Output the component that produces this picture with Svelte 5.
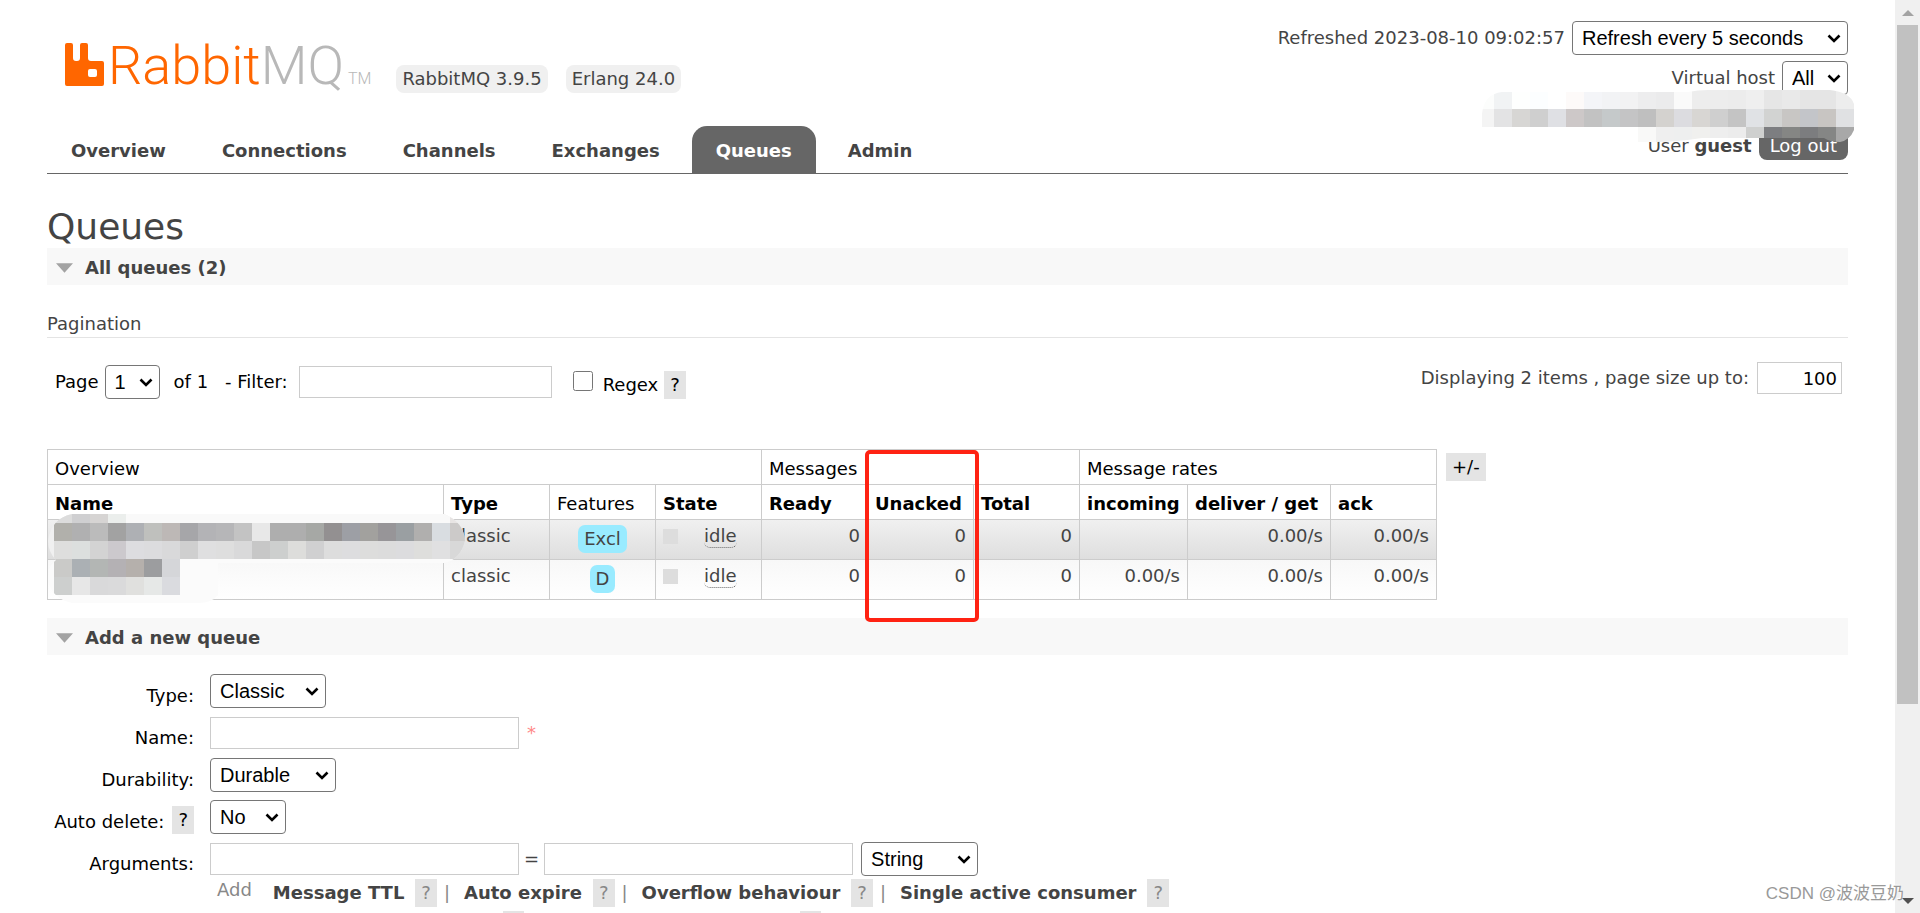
<script lang="ts">
  type Option = string;

  const tabs = ['Overview', 'Connections', 'Channels', 'Exchanges', 'Queues', 'Admin'];
  let activeTab = $state('Queues');

  const queues = [
    { type: 'classic', feature: 'Excl', state: 'idle', ready: 0, unacked: 0, total: 0, incoming: '', deliver: '0.00/s', ack: '0.00/s' },
    { type: 'classic', feature: 'D', state: 'idle', ready: 0, unacked: 0, total: 0, incoming: '0.00/s', deliver: '0.00/s', ack: '0.00/s' },
  ];

  const argLinks = [
    ['Message TTL', 'Auto expire', 'Overflow behaviour', 'Single active consumer'],
    ['Dead letter exchange', 'Dead letter routing key'],
  ];

  let refresh = $state('Refresh every 5 seconds');
  let vhost = $state('All');
  let page = $state('1');
  let filter = $state('');
  let regex = $state(false);
  let pageSize = $state('100');
  let queueType = $state('Classic');
  let queueName = $state('');
  let durability = $state('Durable');
  let autoDelete = $state('No');
  let argKey = $state('');
  let argValue = $state('');
  let argType = $state('String');

  // masked text: each string is a row of cell colours, left to right
  const cells = (row: string) => row.split(' ').map((c) => '#' + c);

  const clusterMask = [
    { x: 0, y: 0, h: 19, fill: cells('fcfdfc f1f3f4 fefffe fcfeff ffffff fdfaf9 f4f5f8 f2f3f5 f2f2f3 ededee ebebec fafafa ededed ededed ececec efefef e6e6e6 e9e9e9 e5e5e5 e5e5e5 ededed') },
    { x: 0, y: 19, h: 18, fill: cells('f4f4f4 e3e3e4 d7d6d4 cfcfcf dfe0e4 cdc8c8 c2c2c2 c5c9ca c4c4c5 bfbfbf d4d2cf dcdce0 d8d6d3 cfcfcf c4c4c4 e0e2e5 d2d3d2 c8c6c4 c3c5c9 c8c5c2 e0e1e3') },
    { x: 162, y: 37, h: 15, fill: cells('f9f9f8 efefef eeefef f0f0ee eeeeee ececec cfd0cf 7d7e81 858684 7c7d7f 858685 a8a8a8') },
  ];

  const nameMask = [
    { x: 6, y: 0, h: 9, fill: cells('dcdcdc cfcfd1 d6d4d3 ebeeec f9f9f9 f9f9f9 f9f9f9 f9f9f9 f9f9f9 f9f9f9 f9f9f9 f9f9f9 f9f9f9 f9f9f9 f9f9f9 f9f9f9 f9f9f9 f9f9f9 f9f9f9 f9f9f9 f9f9f9 f9f9f9 e8e5e4') },
    { x: 6, y: 9, h: 18, fill: cells('b1b0ab b0b0b1 bbbbbb a2a2a2 aeb0b4 bfc0bd bdb8b6 a6a6a9 b3b3b6 b6b6b8 c3c3c3 e8e8e8 aeaeae aeaeae a6a8a5 939091 9d9fa5 a2a19e 979598 9a9fa2 b0afae d9dde1 cccac9') },
    { x: 6, y: 27, h: 18, fill: cells('dededd dcdfde d3d3d3 ccc9cd dddde0 dcdcde d9d9da cfcfcf dfdfe0 dedede d9d9da c7c7c7 cdcfce dddddb d0d0d1 dddddd dddddf dddddc dcdcdc dcdcde dededc e0e0e1 d8d8d8') },
    { x: 6, y: 45, h: 18, fill: cells('cacac8 abb0b4 b3b6b4 b4b1b4 b5b0ac 9c9d9f d5d6d9') },
    { x: 6, y: 63, h: 18, fill: cells('cdcfce e7e7e7 d9d9da dadadb e0e0de e6e8e7 dadbdf') },
  ];
</script>

{#snippet chevron()}
  <svg class="chevron" viewBox="0 0 14 9" aria-hidden="true">
    <path d="M1.5 1.5 L7 7 L12.5 1.5" />
  </svg>
{/snippet}

{#snippet triangle()}
  <svg class="triangle" viewBox="0 0 18 10" aria-hidden="true">
    <path d="M0 0 H18 L9 10 Z" />
  </svg>
{/snippet}

{#snippet options(list: Option[])}
  {#each list as o}
    <option>{o}</option>
  {/each}
{/snippet}

{#snippet mask(rows)}
  {#each rows as row}
    {#each row.fill as fill, i}
      <rect x={row.x + i * 18} y={row.y} width="18" height={row.h} {fill} />
    {/each}
  {/each}
{/snippet}

<div class="window">
  <div class="page">
    <header>
      <div class="brand-side">
        <div class="brand">
          <a class="logo" href="#/" aria-label="RabbitMQ">
            <svg class="rabbit" viewBox="0 0 39 43" aria-hidden="true">
              <path
                fill-rule="evenodd"
                d="M2 0 H6 Q8 0 8 2 V15 Q8 18 11 18 H12 Q15 18 15 15 V2 Q15 0 17 0 H21 Q23 0 23 2 V15 Q23 18 26 18 H37 Q39 18 39 20 V41 Q39 43 37 43 H2 Q0 43 0 41 V2 Q0 0 2 0 Z M25 26 Q23 26 23 28 V32 Q23 34 25 34 H30 Q32 34 32 32 V28 Q32 26 30 26 Z"
              />
            </svg>
            <span class="wordmark">Rabbit<span class="mq">MQ</span></span>
            <span class="tm">TM</span>
          </a>
          <span class="version">RabbitMQ 3.9.5</span>
          <span class="version">Erlang 24.0</span>
        </div>
        <nav>
          {#each tabs as tab}
            <a href="#/{tab.toLowerCase()}" class:selected={tab === activeTab} onclick={() => (activeTab = tab)}>{tab}</a>
          {/each}
        </nav>
      </div>

      <div class="status">
        <div class="status-row">
          <label for="refresh">Refreshed 2023-08-10 09:02:57</label>
          <span class="select">
            <select id="refresh" bind:value={refresh}>
              {@render options(['Refresh every 5 seconds', 'Refresh every 10 seconds', 'Refresh every 30 seconds', 'Do not refresh'])}
            </select>
            {@render chevron()}
          </span>
        </div>
        <div class="status-row">
          <label for="vhost">Virtual host</label>
          <span class="select">
            <select id="vhost" bind:value={vhost}>{@render options(['All', '/'])}</select>
            {@render chevron()}
          </span>
        </div>
        <div class="status-row user">
          <span>User <b>guest</b></span>
          <button class="logout">Log out</button>
        </div>
        <svg class="cluster-mask" viewBox="0 0 378 52" aria-hidden="true">
          <clipPath id="cluster-clip">
            <path d="M6 37 V24 Q8 4 26 2 H212 Q222 0 232 0 H354 Q374 2 378 14 V40 Q374 50 364 52 Q354 52 348 48 H226 Q200 52 180 52 H162 V37 Z" />
          </clipPath>
          <g clip-path="url(#cluster-clip)">{@render mask(clusterMask)}</g>
        </svg>
      </div>
    </header>

    <main>
      <h1>Queues</h1>

      <section>
        <h2>{@render triangle()}All queues (2)</h2>
        <h3>Pagination</h3>

        <div class="pagination">
          <div class="filters">
            <div class="group">
              <label for="page">Page</label>
              <span class="select">
                <select id="page" bind:value={page}>{@render options(['1'])}</select>
                {@render chevron()}
              </span>
              <span class="page-count">of 1</span>
            </div>
            <div class="group filter">
              <label for="filter">- Filter:</label>
              <input id="filter" type="text" bind:value={filter} />
            </div>
            <div class="group regex">
              <input id="regex" type="checkbox" bind:checked={regex} />
              <label for="regex">Regex</label>
              <button class="help">?</button>
            </div>
          </div>
          <div class="group page-size">
            <label for="page-size">Displaying 2 items , page size up to:</label>
            <input id="page-size" type="text" bind:value={pageSize} />
          </div>
        </div>

        <div class="queue-list">
          <table>
            <colgroup>
              <col class="name" /><col /><col /><col /><col /><col /><col /><col class="incoming" /><col class="deliver" /><col />
            </colgroup>
            <thead>
              <tr>
                <th class="plain" colspan="4">Overview</th>
                <th class="plain" colspan="3">Messages</th>
                <th class="plain" colspan="3">Message rates</th>
              </tr>
              <tr>
                <th>Name</th>
                <th>Type</th>
                <th class="plain">Features</th>
                <th>State</th>
                <th>Ready</th>
                <th>Unacked</th>
                <th>Total</th>
                <th>incoming</th>
                <th>deliver / get</th>
                <th>ack</th>
              </tr>
            </thead>
            <tbody>
              {#each queues as q}
                <tr>
                  <td></td>
                  <td>{q.type}</td>
                  <td class="features"><span class="feature">{q.feature}</span></td>
                  <td>
                    <div class="state"><span class="state-box"></span><span class="state-text">{q.state}</span></div>
                  </td>
                  <td class="r">{q.ready}</td>
                  <td class="r">{q.unacked}</td>
                  <td class="r">{q.total}</td>
                  <td class="r">{q.incoming}</td>
                  <td class="r">{q.deliver}</td>
                  <td class="r">{q.ack}</td>
                </tr>
              {/each}
            </tbody>
          </table>
          <button class="help columns">+/-</button>

          <svg class="name-mask" viewBox="0 0 420 90" aria-hidden="true">
            <clipPath id="name-clip">
              <path d="M24 0 H396 Q416 8 417 27 Q412 46 396 49 H170 V81 Q164 89 150 89 H24 Q2 84 0 64 Q0 52 8 46 Q0 38 0 26 Q4 4 24 0 Z" />
            </clipPath>
            <g clip-path="url(#name-clip)">
              <rect width="420" height="45" fill="#f0f0f0" />
              <rect y="45" width="420" height="45" fill="#fbfbfb" />
              {@render mask(nameMask)}
            </g>
          </svg>
          <div class="highlight"></div>
        </div>
      </section>

      <section>
        <h2>{@render triangle()}Add a new queue</h2>

        <form onsubmit={(e) => e.preventDefault()}>
          <div class="label"><label for="type">Type:</label></div>
          <div class="field">
            <span class="select">
              <select id="type" bind:value={queueType}>{@render options(['Classic', 'Quorum'])}</select>
              {@render chevron()}
            </span>
          </div>

          <div class="label"><label for="name">Name:</label></div>
          <div class="field">
            <input id="name" type="text" bind:value={queueName} />
            <span class="required">*</span>
          </div>

          <div class="label"><label for="durability">Durability:</label></div>
          <div class="field">
            <span class="select">
              <select id="durability" bind:value={durability}>{@render options(['Durable', 'Transient'])}</select>
              {@render chevron()}
            </span>
          </div>

          <div class="label">
            <label for="auto-delete">Auto delete:</label>
            <button type="button" class="help">?</button>
          </div>
          <div class="field">
            <span class="select">
              <select id="auto-delete" bind:value={autoDelete}>{@render options(['No', 'Yes'])}</select>
              {@render chevron()}
            </span>
          </div>

          <div class="label"><label for="arg-key">Arguments:</label></div>
          <div class="field">
            <input id="arg-key" type="text" bind:value={argKey} />
            <span class="equals">=</span>
            <input type="text" aria-label="Argument value" bind:value={argValue} />
            <span class="select">
              <select aria-label="Argument type" bind:value={argType}>{@render options(['String', 'Number', 'Boolean', 'List'])}</select>
              {@render chevron()}
            </span>
          </div>

          <div class="arguments">
            <span class="add">Add</span>
            <div>
              {#each argLinks as row}
                <div class="arg-row">
                  {#each row as link, i}
                    {#if i > 0}<span class="bar">|</span>{/if}
                    <a href="#/queues">{link}</a>
                    <button type="button" class="help muted">?</button>
                  {/each}
                </div>
              {/each}
            </div>
          </div>
        </form>
      </section>
    </main>
  </div>

  <div class="scrollbar" aria-hidden="true">
    <svg class="arrow up" viewBox="0 0 12 6"><path d="M6 0 L12 6 H0 Z" /></svg>
    <div class="thumb"></div>
    <svg class="arrow" viewBox="0 0 12 6"><path d="M0 0 H12 L6 6 Z" /></svg>
  </div>

  <div class="watermark">CSDN @波波豆奶</div>
</div>

<style>
  :global(body) {
    background: #fff;
    overflow: hidden;
  }

  .window {
    position: relative;
    display: flex;
    height: 100vh;
    overflow: hidden;
    font: 18px/22px Verdana, 'DejaVu Sans', sans-serif;
    color: #444;
  }

  .page {
    flex: 1;
    min-width: 0;
    padding: 0 47px;
    overflow: hidden;
  }

  a {
    color: inherit;
    text-decoration: none;
    font-weight: bold;
  }

  header {
    display: flex;
    justify-content: space-between;
    border-bottom: 1px solid #666;
  }

  .brand-side {
    display: flex;
    flex-direction: column;
    justify-content: space-between;
    padding-top: 36px;
  }

  .brand {
    display: flex;
    align-items: flex-end;
    gap: 18px;
    padding-left: 18px;
  }

  .logo {
    display: flex;
    align-items: flex-end;
    gap: 4px;
    height: 50px;
    margin: 0 7px 7px 0;
    font-family: 'Liberation Sans Narrow', Roboto, sans-serif;
    font-weight: 300;
    color: #f60;
  }

  .rabbit {
    width: 39px;
    height: 43px;
    fill: #f60;
  }

  .wordmark {
    font-size: 54px;
    line-height: 40px;
  }

  .mq {
    color: #b8b8b8;
  }

  .tm {
    font-size: 16px;
    line-height: 14px;
    color: #b8b8b8;
  }

  .version {
    padding: 3px 6px;
    border-radius: 8px;
    background: #f0f0f0;
  }

  nav {
    display: flex;
    gap: 8px;
  }

  nav a {
    padding: 14px 24px 11px;
    border-radius: 15px 15px 0 0;
  }

  nav a.selected {
    background: #666;
    color: #fff;
  }

  .status {
    position: relative;
    display: flex;
    flex-direction: column;
    gap: 6px;
    padding: 21px 0 13px;
  }

  .status-row {
    display: flex;
    align-items: center;
    justify-content: flex-end;
    gap: 7px;
  }

  .user {
    align-items: baseline;
    margin-top: 25px;
  }

  .logout {
    padding: 9px 11px 3px;
    border: 0;
    border-radius: 8px;
    background: #666;
    color: #fff;
    font: inherit;
  }

  .cluster-mask {
    position: absolute;
    top: 90px;
    right: -6px;
    width: 378px;
    height: 52px;
  }

  .select {
    position: relative;
    display: inline-flex;
  }

  select {
    appearance: none;
    height: 34px;
    padding: 0 32px 0 9px;
    border: 1px solid #767676;
    border-radius: 4px;
    background: #fff;
    color: #000;
    font: 20px 'Liberation Sans', Arial, sans-serif;
  }

  .chevron {
    position: absolute;
    top: 13px;
    right: 7px;
    width: 14px;
    height: 9px;
    fill: none;
    stroke: #000;
    stroke-width: 2.6;
    pointer-events: none;
  }

  input[type='text'] {
    box-sizing: border-box;
    width: 309px;
    height: 32px;
    padding: 4px;
    border: 1px solid #ccc;
    background: #fff;
    color: #000;
    font: inherit;
  }

  input[type='checkbox'] {
    width: 20px;
    height: 20px;
    margin: 0 4px 0 0;
  }

  h1 {
    margin: 32px 0 0;
    font-size: 36px;
    line-height: 42px;
    font-weight: normal;
  }

  h2 {
    display: flex;
    align-items: center;
    gap: 12px;
    box-sizing: border-box;
    height: 37px;
    margin: 0;
    padding: 2px 0 0 9px;
    background: #f8f8f8;
    font-size: 18px;
  }

  .triangle {
    width: 17px;
    height: 10px;
    fill: #a3a3a3;
  }

  h3 {
    margin: 28px 0 24px;
    padding-bottom: 2px;
    border-bottom: 1px solid #e4e4e4;
    font-size: 18px;
    font-weight: normal;
  }

  .pagination {
    display: flex;
    justify-content: space-between;
    align-items: flex-start;
    padding: 0 6px 0 8px;
  }

  .filters {
    display: flex;
    align-items: center;
    gap: 17px;
    padding-top: 3px;
    color: #000;
  }

  .group {
    display: flex;
    align-items: center;
    gap: 6px;
  }

  .page-count {
    margin-left: 8px;
  }

  .filter {
    gap: 11px;
  }

  .filter input[type='text'] {
    width: 253px;
  }

  .regex {
    align-self: flex-end;
    margin-left: 4px;
  }

  .regex input {
    align-self: flex-start;
  }

  .page-size {
    gap: 8px;
  }

  .page-size input[type='text'] {
    width: 85px;
    text-align: right;
  }

  .help {
    height: 28px;
    padding: 0 6px;
    border: 0;
    background: #e4e4e4;
    color: #000;
    font: inherit;
  }

  .muted {
    color: #888;
  }

  .queue-list {
    position: relative;
    display: flex;
    align-items: flex-start;
    gap: 9px;
    padding: 50px 0 18px;
  }

  .columns {
    margin-top: 4px;
  }

  table {
    border-collapse: collapse;
  }

  col {
    width: 106px;
  }

  .name {
    width: 396px;
  }

  .incoming {
    width: 108px;
  }

  .deliver {
    width: 143px;
  }

  th,
  td {
    border: 1px solid #ccc;
    text-align: left;
    white-space: nowrap;
  }

  th {
    padding: 8px 7px 4px;
    color: #000;
  }

  .plain {
    font-weight: normal;
  }

  td {
    height: 30px;
    padding: 5px 7px 4px;
    vertical-align: top;
  }

  tbody tr:nth-child(odd) {
    background: linear-gradient(#f0f0f0, #dedede);
  }

  tbody tr:nth-child(even) {
    background: linear-gradient(#f8f8f8, #fff);
  }

  .r {
    text-align: right;
  }

  .features {
    text-align: center;
  }

  .feature {
    display: inline-block;
    padding: 3px 6px;
    border-radius: 7px;
    background: #99ebff;
  }

  .state {
    display: flex;
    align-items: flex-start;
    gap: 26px;
  }

  .state-box {
    width: 15px;
    height: 15px;
    margin-top: 4px;
    background: #ddd;
  }

  .state-text {
    border-bottom: 1px dotted #666;
    border-radius: 6px;
  }

  .name-mask {
    position: absolute;
    top: 115px;
    left: 1px;
    width: 420px;
    height: 90px;
  }

  .highlight {
    position: absolute;
    top: 51px;
    left: 818px;
    box-sizing: border-box;
    width: 114px;
    height: 172px;
    border: 4px solid #ff2213;
    border-radius: 5px;
  }

  form {
    display: grid;
    grid-template-columns: 147px 1fr;
    grid-auto-rows: 34px;
    gap: 8px 16px;
    padding-top: 19px;
  }

  .label {
    display: flex;
    align-items: flex-end;
    justify-content: flex-end;
    gap: 8px;
    color: #000;
  }

  .label label {
    line-height: 24px;
  }

  .field {
    display: flex;
    align-items: center;
    gap: 8px;
  }

  .equals {
    margin: 0 -3px;
  }

  .required {
    color: #f88;
  }

  .arguments {
    grid-column: 2;
    display: flex;
    gap: 21px;
    margin-top: -7px;
    padding-left: 7px;
  }

  .add,
  .bar {
    color: #888;
  }

  .add {
    line-height: 26px;
  }

  .arg-row {
    display: flex;
    align-items: center;
    height: 32px;
    white-space: nowrap;
  }

  .arg-row .help {
    margin: 0 7px 0 11px;
  }

  .bar {
    margin-right: 14px;
  }

  .scrollbar {
    display: flex;
    flex-direction: column;
    align-items: center;
    width: 25px;
    padding: 10px 0 9px;
    box-sizing: border-box;
    background: #f0f0f0;
  }

  .thumb {
    width: 21px;
    height: 76%;
    margin: 9px 0 auto;
    background: #c1c1c1;
  }

  .arrow {
    flex: none;
    width: 12px;
    height: 6px;
    fill: #505050;
  }

  .up {
    fill: #a3a3a3;
  }

  .watermark {
    position: absolute;
    right: 16px;
    bottom: 7px;
    font: 17px/24px 'Liberation Sans', 'Noto Sans CJK SC', sans-serif;
    color: #999;
    text-shadow: -1px -1px 0 #fff;
  }
</style>
